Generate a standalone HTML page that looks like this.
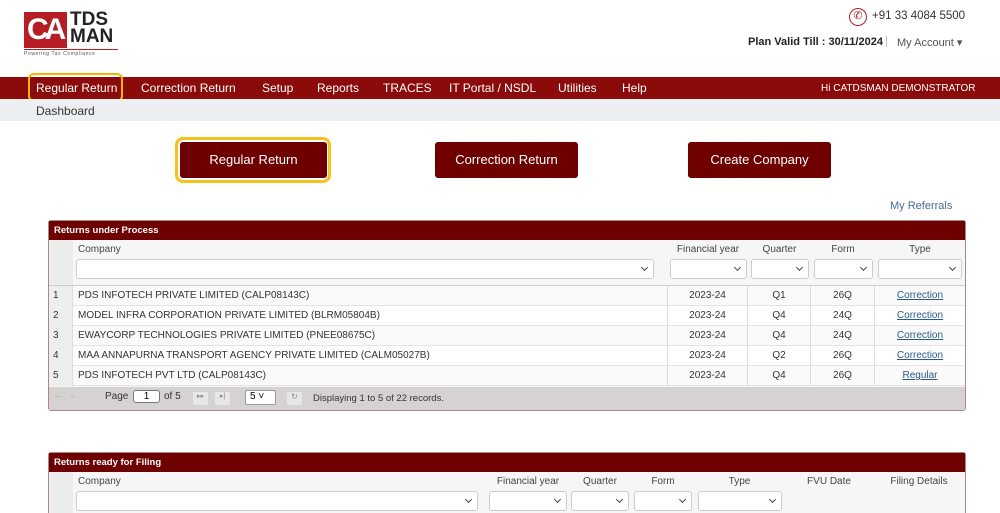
<!DOCTYPE html>
<html><head><meta charset="utf-8"><style>
*{box-sizing:border-box;margin:0;padding:0}
html,body{width:1000px;height:513px;overflow:hidden}
body{background:#fff;font-family:"Liberation Sans",sans-serif;position:relative}
.a{position:absolute}
.nav{left:0;top:77px;width:1000px;height:22px;background:#8b0a0a;color:#fff;font-size:12px}
.nav span{position:absolute;top:4px;white-space:nowrap}
.btn{position:absolute;top:142px;height:36px;background:#6e0000;color:#fff;font-size:13px;text-align:center;line-height:36px;border-radius:3px}
.sel{position:absolute;height:20px;border:1px solid #ccc;border-radius:3px;background:#fff}
.sel:after{content:"";position:absolute;right:6px;top:5px;width:4px;height:4px;border-right:1.5px solid #444;border-bottom:1.5px solid #444;transform:rotate(45deg)}
.th{position:absolute;font-size:10px;color:#444;text-align:center}
.row{position:absolute;left:49px;width:916px;height:20px;border-bottom:1px solid #e4e4e4;font-size:10px;color:#333}
.row div{position:absolute;top:0;height:20px;line-height:20px;border-right:1px solid #ddd}
.lnk{color:#2a5a8a;text-decoration:underline}
</style></head><body>
<div class="a" style="left:24px;top:12px;width:43px;height:36px;background:#b51e24"></div>
<div class="a" style="left:27px;top:13px;color:#fff;font-size:30px;font-weight:bold;letter-spacing:-4px">CA</div>
<div class="a" style="left:70px;top:11px;font-size:19px;line-height:17px;font-weight:bold;color:#222">TDS<br>MAN</div>
<div class="a" style="left:24px;top:49px;width:94px;height:1px;background:#b51e24"></div>
<div class="a" style="left:24px;top:51px;font-size:5px;color:#555;letter-spacing:0.6px">Powering Tax Compliance</div>
<div class="a" style="left:849px;top:8px;width:18px;height:18px;border:1.5px solid #b51e24;border-radius:50%;color:#b51e24;font-size:11px;text-align:center;line-height:15px">✆</div>
<div class="a" style="left:872px;top:10px;font-size:11.5px;color:#333">+91 33 4084 5500</div>
<div class="a" style="left:748px;top:36px;font-size:11px;color:#222;font-weight:bold">Plan Valid Till : 30/11/2024</div>
<div class="a" style="left:885px;top:35px;font-size:11px;color:#bbb">|</div>
<div class="a" style="left:897px;top:36px;font-size:11px;color:#555">My Account ▾</div>
<div class="a nav">
<span style="left:36px">Regular Return</span><span style="left:141px">Correction Return</span><span style="left:262px">Setup</span><span style="left:317px">Reports</span><span style="left:383px">TRACES</span><span style="left:449px">IT Portal / NSDL</span><span style="left:558px">Utilities</span><span style="left:622px">Help</span><span style="left:821px;font-size:10px;top:6px">Hi CATDSMAN DEMONSTRATOR</span>
</div>
<div class="a" style="left:28px;top:73px;width:95px;height:29px;border:2.5px solid #f5b800;border-radius:6px"></div>
<div class="a" style="left:0;top:99px;width:1000px;height:22px;background:#eceef0"></div>
<div class="a" style="left:36px;top:104px;font-size:12px;color:#333">Dashboard</div>
<div class="a" style="left:175px;top:137px;width:156px;height:46px;border:3px solid #f5c020;border-radius:8px"></div>
<div class="btn" style="left:180px;width:147px">Regular Return</div>
<div class="btn" style="left:435px;width:143px">Correction Return</div>
<div class="btn" style="left:688px;width:143px">Create Company</div>
<div class="a" style="left:890px;top:200px;font-size:11px;color:#4a6a9a">My Referrals</div>

<div class="a" style="left:48px;top:220px;width:918px;height:191px;border:1px solid #a88;border-radius:3px;background:#f6f6f6"></div>
<div class="a" style="left:49px;top:221px;width:916px;height:19px;background:#6e0000;color:#fff;font-size:9.5px;font-weight:bold;line-height:19px;padding-left:5px">Returns under Process</div>
<div class="a" style="left:49px;top:240px;width:24px;height:46px;background:#ececec"></div>
<div class="th" style="left:78px;top:244px">Company</div>
<div class="th" style="left:668px;top:244px;width:80px">Financial year</div>
<div class="th" style="left:748px;top:244px;width:63px">Quarter</div>
<div class="th" style="left:811px;top:244px;width:64px">Form</div>
<div class="th" style="left:875px;top:244px;width:90px">Type</div>
<div class="sel" style="left:76px;top:259px;width:578px"></div>
<div class="sel" style="left:670px;top:259px;width:77px"></div>
<div class="sel" style="left:751px;top:259px;width:58px"></div>
<div class="sel" style="left:814px;top:259px;width:59px"></div>
<div class="sel" style="left:878px;top:259px;width:84px"></div>
<div class="a" style="left:49px;top:285px;width:916px;height:1px;background:#ccc"></div>

<div class="row" style="top:286px;background:#fafafa"><div style="left:0;width:24px;padding-left:4px;background:#eee">1</div><div style="left:24px;width:595px;padding-left:5px">PDS INFOTECH PRIVATE LIMITED (CALP08143C)</div><div style="left:619px;width:80px;text-align:center">2023-24</div><div style="left:699px;width:63px;text-align:center">Q1</div><div style="left:762px;width:64px;text-align:center">26Q</div><div style="left:826px;width:90px;text-align:center;border:0"><span class="lnk">Correction</span></div></div>
<div class="row" style="top:306px;background:#fff"><div style="left:0;width:24px;padding-left:4px;background:#eee">2</div><div style="left:24px;width:595px;padding-left:5px">MODEL INFRA CORPORATION PRIVATE LIMITED (BLRM05804B)</div><div style="left:619px;width:80px;text-align:center">2023-24</div><div style="left:699px;width:63px;text-align:center">Q4</div><div style="left:762px;width:64px;text-align:center">24Q</div><div style="left:826px;width:90px;text-align:center;border:0"><span class="lnk">Correction</span></div></div>
<div class="row" style="top:326px;background:#fafafa"><div style="left:0;width:24px;padding-left:4px;background:#eee">3</div><div style="left:24px;width:595px;padding-left:5px">EWAYCORP TECHNOLOGIES PRIVATE LIMITED (PNEE08675C)</div><div style="left:619px;width:80px;text-align:center">2023-24</div><div style="left:699px;width:63px;text-align:center">Q4</div><div style="left:762px;width:64px;text-align:center">24Q</div><div style="left:826px;width:90px;text-align:center;border:0"><span class="lnk">Correction</span></div></div>
<div class="row" style="top:346px;background:#fff"><div style="left:0;width:24px;padding-left:4px;background:#eee">4</div><div style="left:24px;width:595px;padding-left:5px">MAA ANNAPURNA TRANSPORT AGENCY PRIVATE LIMITED (CALM05027B)</div><div style="left:619px;width:80px;text-align:center">2023-24</div><div style="left:699px;width:63px;text-align:center">Q2</div><div style="left:762px;width:64px;text-align:center">26Q</div><div style="left:826px;width:90px;text-align:center;border:0"><span class="lnk">Correction</span></div></div>
<div class="row" style="top:366px;background:#fafafa"><div style="left:0;width:24px;padding-left:4px;background:#eee">5</div><div style="left:24px;width:595px;padding-left:5px">PDS INFOTECH PVT LTD (CALP08143C)</div><div style="left:619px;width:80px;text-align:center">2023-24</div><div style="left:699px;width:63px;text-align:center">Q4</div><div style="left:762px;width:64px;text-align:center">26Q</div><div style="left:826px;width:90px;text-align:center;border:0"><span class="lnk">Regular</span></div></div>

<div class="a" style="left:49px;top:387px;width:916px;height:23px;background:#d6d2d2"></div>
<div class="a" style="left:55px;top:392px;font-size:8px;color:#bbb">⇤ &nbsp;&nbsp; ⇠</div>
<div class="a" style="left:105px;top:391px;font-size:10px;color:#333">Page</div>
<div class="a" style="left:133px;top:390px;width:27px;height:13px;border:1px solid #777;border-radius:3px;background:#fff;font-size:10px;text-align:center;line-height:11px">1</div>
<div class="a" style="left:164px;top:391px;font-size:10px;color:#333">of 5</div>
<div class="a" style="left:193px;top:392px;width:15px;height:13px;background:#e6e6e6;font-size:7px;color:#888;text-align:center">▸▸</div>
<div class="a" style="left:215px;top:392px;width:15px;height:13px;background:#e6e6e6;font-size:7px;color:#888;text-align:center">▸|</div>
<div class="a" style="left:245px;top:390px;width:31px;height:15px;border:1px solid #999;border-radius:2px;background:#fff;font-size:10px;padding-left:4px">5 ˅</div>
<div class="a" style="left:287px;top:392px;width:15px;height:13px;background:#e6e6e6;font-size:8px;color:#888;text-align:center">↻</div>
<div class="a" style="left:313px;top:393px;font-size:9.5px;color:#333">Displaying 1 to 5 of 22 records.</div>

<div class="a" style="left:48px;top:452px;width:918px;height:65px;border:1px solid #a88;border-radius:3px;background:#f6f6f6"></div>
<div class="a" style="left:49px;top:453px;width:916px;height:19px;background:#6e0000;color:#fff;font-size:9.5px;font-weight:bold;line-height:19px;padding-left:5px">Returns ready for Filing</div>
<div class="a" style="left:49px;top:472px;width:24px;height:41px;background:#ececec"></div>
<div class="th" style="left:78px;top:476px">Company</div>
<div class="th" style="left:488px;top:476px;width:80px">Financial year</div>
<div class="th" style="left:570px;top:476px;width:60px">Quarter</div>
<div class="th" style="left:633px;top:476px;width:60px">Form</div>
<div class="th" style="left:697px;top:476px;width:85px">Type</div>
<div class="th" style="left:800px;top:476px;width:58px">FVU Date</div>
<div class="th" style="left:880px;top:476px;width:78px">Filing Details</div>
<div class="sel" style="left:76px;top:491px;width:402px"></div>
<div class="sel" style="left:489px;top:491px;width:78px"></div>
<div class="sel" style="left:571px;top:491px;width:58px"></div>
<div class="sel" style="left:634px;top:491px;width:58px"></div>
<div class="sel" style="left:698px;top:491px;width:84px"></div>
</body></html>
